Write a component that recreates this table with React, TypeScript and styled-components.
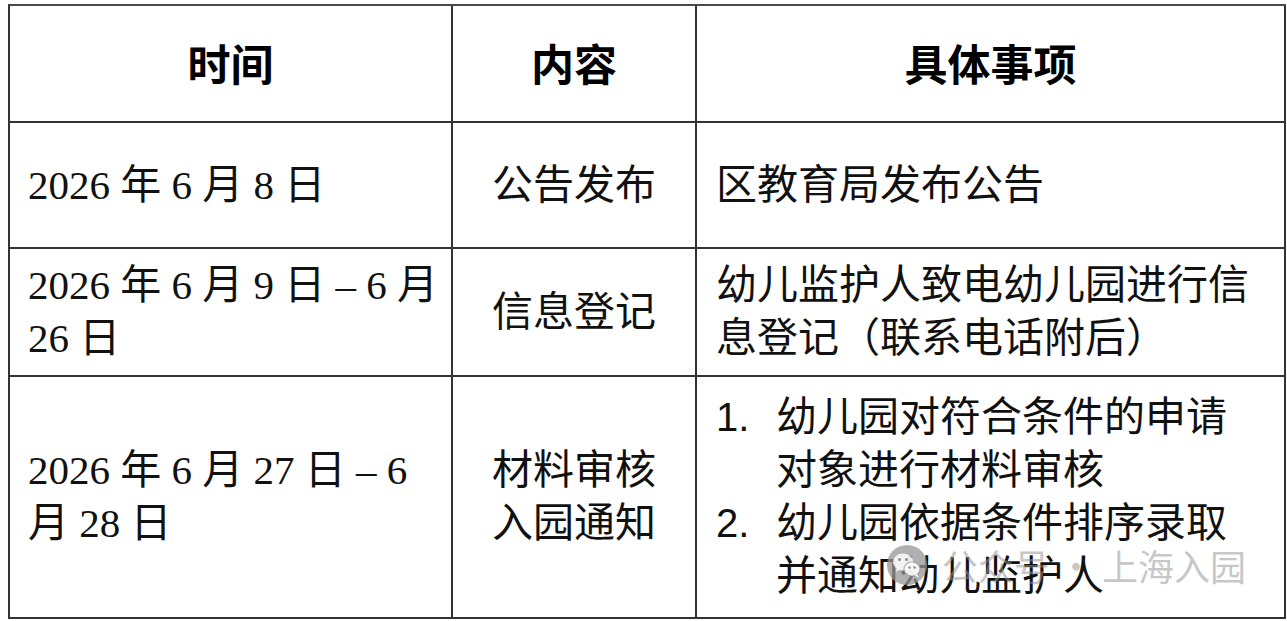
import React from "react";
import styled, { createGlobalStyle } from "styled-components";

const GlobalStyle = createGlobalStyle`
  html, body {
    margin: 0;
    padding: 0;
    background: #ffffff;
  }
  body {
    font-family: "Liberation Serif", "Noto Sans CJK SC", serif;
    color: #111;
  }
`;

type Row = {
  time: string[];
  content: string[];
  details: string[];
  list?: string[][];
  height: number;
};

const rows: Row[] = [
  {
    time: ["2026 年 6 月 8 日"],
    content: ["公告发布"],
    details: ["区教育局发布公告"],
    height: 126,
  },
  {
    time: ["2026 年 6 月 9 日 – 6 月", "26 日"],
    content: ["信息登记"],
    details: ["幼儿监护人致电幼儿园进行信", "息登记（联系电话附后）"],
    height: 128,
  },
  {
    time: ["2026 年 6 月 27 日 – 6", "月 28 日"],
    content: ["材料审核", "入园通知"],
    details: [],
    list: [
      ["幼儿园对符合条件的申请", "对象进行材料审核"],
      ["幼儿园依据条件排序录取", "并通知幼儿监护人"],
    ],
    height: 242,
  },
];

function Lines({ lines }: { lines: string[] }) {
  return (
    <>
      {lines.map((l, i) => (
        <React.Fragment key={i}>
          {i > 0 && <br />}
          {l}
        </React.Fragment>
      ))}
    </>
  );
}

export default function App() {
  return (
    <Page>
      <GlobalStyle />
      <Table>
        <HeadCell>时间</HeadCell>
        <HeadCell>内容</HeadCell>
        <HeadCell $last>具体事项</HeadCell>
        {rows.map((r, i) => (
          <React.Fragment key={i}>
            <TimeCell $h={r.height} $bottom={i === rows.length - 1}>
              <Text>
                <Lines lines={r.time} />
              </Text>
            </TimeCell>
            <ContentCell $h={r.height} $bottom={i === rows.length - 1}>
              <Text>
                <Lines lines={r.content} />
              </Text>
            </ContentCell>
            <DetailCell $h={r.height} $bottom={i === rows.length - 1}>
              {r.list ? (
                <List>
                  {r.list.map((item, j) => (
                    <ListItem key={j}>
                      <Num>{j + 1}.</Num>
                      <Text>
                        <Lines lines={item} />
                      </Text>
                    </ListItem>
                  ))}
                </List>
              ) : (
                <Text>
                  <Lines lines={r.details} />
                </Text>
              )}
            </DetailCell>
          </React.Fragment>
        ))}
        <Watermark>
          <WechatIcon />
          <MarkText>公众号 · 上海入园</MarkText>
        </Watermark>
      </Table>
    </Page>
  );
}

function WechatIcon() {
  return (
    <svg width="42" height="42" viewBox="0 0 42 42">
      <circle cx="21" cy="21" r="20" fill="rgba(150,150,150,0.75)" />
      <ellipse cx="17" cy="18" rx="10" ry="8.5" fill="rgba(255,255,255,0.85)" />
      <path d="M11 24 l-1.5 4 l4.5 -2.5 z" fill="rgba(255,255,255,0.85)" />
      <ellipse cx="26" cy="25" rx="8" ry="7" fill="rgba(255,255,255,0.9)" stroke="rgba(150,150,150,0.75)" strokeWidth="1.2" />
      <path d="M31 30 l2 3.5 l-4.5 -2 z" fill="rgba(255,255,255,0.9)" />
      <circle cx="13.5" cy="15.5" r="1.5" fill="rgba(130,130,130,0.9)" />
      <circle cx="20.5" cy="15.5" r="1.5" fill="rgba(130,130,130,0.9)" />
      <circle cx="23.5" cy="23.5" r="1.2" fill="rgba(130,130,130,0.9)" />
      <circle cx="28.5" cy="23.5" r="1.2" fill="rgba(130,130,130,0.9)" />
    </svg>
  );
}

const Page = styled.div`
  padding: 4px 0 0 8px;
  width: 1287px;
  height: 621px;
  box-sizing: border-box;
  overflow: hidden;
`;

const Table = styled.div`
  position: relative;
  display: grid;
  grid-template-columns: 443px 244px 589px;
  grid-template-rows: 117px auto auto auto;
  width: 1278px;
  border-top: 2px solid #4a4a4a;
  border-left: 2px solid #333;
  box-sizing: border-box;
`;

const Cell = styled.div<{ $h?: number; $bottom?: boolean; $last?: boolean }>`
  box-sizing: border-box;
  height: ${(p) => (p.$h ? `${p.$h}px` : "auto")};
  border-right: 2px solid #333;
  border-bottom: 2px solid #333;
  display: flex;
  align-items: center;
`;

const HeadCell = styled(Cell)`
  justify-content: center;
  font-family: "Noto Sans CJK SC", sans-serif;
  font-weight: 700;
  font-size: 43px;
  color: #000;
  padding-bottom: 4px;
`;

const TimeCell = styled(Cell)`
  padding-left: 18px;
`;

const ContentCell = styled(Cell)`
  justify-content: center;
  text-align: center;
`;

const DetailCell = styled(Cell)`
  padding-left: 19px;
`;

const Text = styled.div`
  font-family: "Liberation Serif", "Noto Sans CJK SC", serif;
  font-size: 41px;
  line-height: 53px;
  color: #111;
  white-space: nowrap;
`;

const List = styled.div`
  display: flex;
  flex-direction: column;
`;

const ListItem = styled.div`
  display: flex;
  align-items: flex-start;
`;

const Num = styled.span`
  width: 60px;
  flex: none;
  font-family: "Liberation Sans", sans-serif;
  font-size: 40px;
  line-height: 53px;
  color: #111;
`;

const Watermark = styled.div`
  position: absolute;
  right: 40px;
  bottom: 28px;
  display: flex;
  align-items: center;
  gap: 14px;
  pointer-events: none;
`;

const MarkText = styled.span`
  font-family: "Noto Sans CJK SC", sans-serif;
  font-size: 36px;
  color: rgba(150, 150, 150, 0.55);
  letter-spacing: 0;
`;
